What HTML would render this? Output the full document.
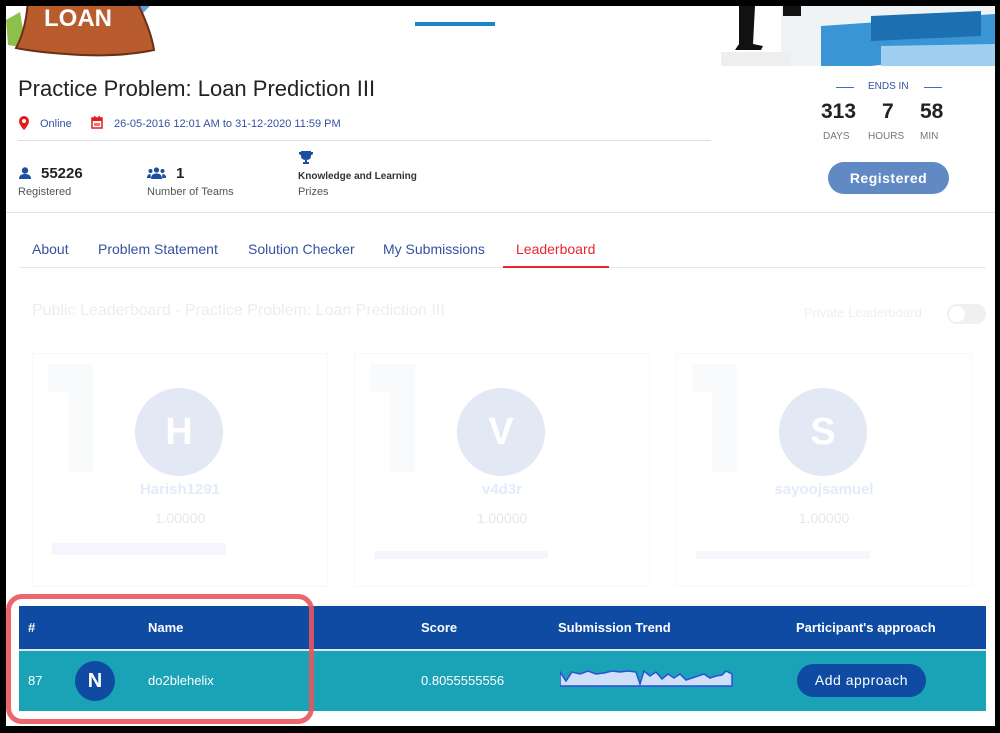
<!DOCTYPE html>
<html><head><meta charset="utf-8"><style>
*{margin:0;padding:0;box-sizing:border-box}
body{width:1000px;height:733px;background:#000;font-family:"Liberation Sans",sans-serif;overflow:hidden;position:relative}
.page{position:absolute;left:6px;top:6px;width:989px;height:720px;background:#fff;overflow:hidden}
.a{position:absolute}
.one{position:absolute;width:70px;height:108px}
</style></head><body>
<div class="page">
 <svg class="a" style="left:0;top:-6px" width="160" height="65">
  <path d="M0 20 L14 12 L20 48 L2 45Z" fill="#8cc04a"/>
  <path d="M120 -5 L150 0 L135 15Z" fill="#5ba3d9"/>
  <path d="M22 0 L130 0 Q145 30 148 50 Q110 58 60 54 Q30 52 10 48 Q20 30 22 0Z" fill="#b85c2e" stroke="#6b2f13" stroke-width="2"/>
  <text x="38" y="26" font-family="Liberation Sans" font-weight="bold" font-size="24" fill="#fff">LOAN</text>
 </svg>
 <div class="a" style="left:409px;top:16px;width:80px;height:4px;background:#1a87c4"></div>
 <svg class="a" style="left:715px;top:0" width="274" height="60">
  <rect x="60" y="0" width="214" height="60" fill="#f0f3f6"/>
  <path d="M100 20 L274 8 L274 45 L150 60 L100 60Z" fill="#3a95d6"/>
  <path d="M150 10 L260 5 L260 30 L150 35Z" fill="#1c6fb0"/>
  <path d="M160 40 L274 38 L274 60 L160 60Z" fill="#9fd0f0"/>
  <path d="M18 0 L34 0 L32 38 L42 40 L40 44 L14 44 L18 38Z" fill="#111"/>
  <rect x="62" y="0" width="18" height="10" fill="#111"/>
  <rect x="0" y="46" width="70" height="14" fill="#eee"/>
 </svg>
 <div class="a" style="left:12px;top:70px;font-size:22px;color:#222">Practice Problem: Loan Prediction III</div>
 <svg class="a" style="left:12px;top:110px" width="12" height="14"><path d="M6 0a5 5 0 0 1 5 5c0 4-5 9-5 9S1 9 1 5a5 5 0 0 1 5-5z" fill="#e21b1b"/><circle cx="6" cy="5" r="2" fill="#fff"/></svg>
 <div class="a" style="left:34px;top:112px;font-size:11px;color:#3552a0">Online</div>
 <svg class="a" style="left:85px;top:110px" width="12" height="13"><rect x="1" y="2" width="10" height="10" fill="none" stroke="#e21b1b" stroke-width="1.5"/><rect x="1" y="2" width="10" height="3" fill="#e21b1b"/><rect x="3" y="0" width="1.5" height="3" fill="#e21b1b"/><rect x="7.5" y="0" width="1.5" height="3" fill="#e21b1b"/><rect x="3" y="7" width="6" height="3" fill="#e21b1b" opacity=".6"/></svg>
 <div class="a" style="left:108px;top:112px;font-size:11px;color:#3552a0">26-05-2016 12:01 AM to 31-12-2020 11:59 PM</div>
 <div class="a" style="left:12px;top:134px;width:693px;height:1px;background:#ddd"></div>
 <svg class="a" style="left:13px;top:161px" width="12" height="12"><circle cx="6" cy="3.5" r="3.2" fill="#1b4fa0"/><path d="M0 12 Q0 7 6 7 Q12 7 12 12Z" fill="#1b4fa0"/></svg>
 <div class="a" style="left:35px;top:159px;font-size:15px;font-weight:bold;color:#222">55226</div>
 <div class="a" style="left:12px;top:180px;font-size:11px;color:#555">Registered</div>
 <svg class="a" style="left:141px;top:161px" width="19" height="12"><circle cx="9.5" cy="3" r="2.6" fill="#1b4fa0"/><circle cx="3.5" cy="4" r="2" fill="#1b4fa0"/><circle cx="15.5" cy="4" r="2" fill="#1b4fa0"/><path d="M4 12 Q4 6.5 9.5 6.5 Q15 6.5 15 12Z M0 11 Q0 7 3.5 7 L4 11Z M19 11 Q19 7 15.5 7 L15 11Z" fill="#1b4fa0"/></svg>
 <div class="a" style="left:170px;top:159px;font-size:15px;font-weight:bold;color:#222">1</div>
 <div class="a" style="left:141px;top:180px;font-size:11px;color:#555">Number of Teams</div>
 <svg class="a" style="left:292px;top:145px" width="16" height="14"><path d="M3 0 H13 V5 Q13 9 8 9 Q3 9 3 5Z M1 1 H3 V4 Q1 4 1 2Z M15 1 H13 V4 Q15 4 15 2Z M7 9 H9 V11 H11 V13 H5 V11 H7Z" fill="#1b4fa0"/></svg>
 <div class="a" style="left:292px;top:165px;font-size:10px;font-weight:bold;color:#333">Knowledge and Learning</div>
 <div class="a" style="left:292px;top:180px;font-size:11px;color:#555">Prizes</div>
 <div class="a" style="left:830px;top:81px;width:18px;height:1px;background:#3a6fc8"></div>
 <div class="a" style="left:862px;top:75px;font-size:10px;color:#3552a0">ENDS IN</div>
 <div class="a" style="left:918px;top:81px;width:18px;height:1px;background:#3a6fc8"></div>
 <div class="a" style="left:815px;top:94px;font-size:21px;font-weight:bold;color:#222">313</div>
 <div class="a" style="left:876px;top:94px;font-size:21px;font-weight:bold;color:#222">7</div>
 <div class="a" style="left:914px;top:94px;font-size:21px;font-weight:bold;color:#222">58</div>
 <div class="a" style="left:817px;top:125px;font-size:10px;color:#777">DAYS</div>
 <div class="a" style="left:862px;top:125px;font-size:10px;color:#777">HOURS</div>
 <div class="a" style="left:914px;top:125px;font-size:10px;color:#777">MIN</div>
 <div class="a" style="left:822px;top:156px;width:121px;height:32px;border-radius:16px;background:#6189c4;color:#fff;font-size:14px;font-weight:bold;text-align:center;line-height:32px;letter-spacing:.5px">Registered</div>
 <div class="a" style="left:0;top:206px;width:989px;height:1px;background:#e3e3e3"></div>
 <div class="a" style="top:235px;left:26px;font-size:14px;color:#3552a0">About</div>
 <div class="a" style="top:235px;left:92px;font-size:14px;color:#3552a0">Problem Statement</div>
 <div class="a" style="top:235px;left:242px;font-size:14px;color:#3552a0">Solution Checker</div>
 <div class="a" style="top:235px;left:377px;font-size:14px;color:#3552a0">My Submissions</div>
 <div class="a" style="top:235px;left:510px;font-size:14px;color:#e8262b">Leaderboard</div>
 <div class="a" style="left:13px;top:261px;width:967px;height:1px;background:#e6eaf0"></div>
 <div class="a" style="left:497px;top:260px;width:106px;height:2px;background:#e8262b"></div>
 <div class="a" style="left:26px;top:296px;font-size:16px;color:#ededed">Public Leaderboard - Practice Problem: Loan Prediction III</div>
 <div class="a" style="left:798px;top:299px;font-size:13px;color:#efefef">Private Leaderboard</div>
 <div class="a" style="left:941px;top:298px;width:39px;height:20px;border-radius:10px;background:#f0f0f0"></div>
 <div class="a" style="left:943px;top:300px;width:16px;height:16px;border-radius:8px;background:#fff"></div>

 <div class="a" style="left:26px;top:347px;width:296px;height:234px;border:1px solid #f8f8f8"></div>
 <div class="a" style="left:348px;top:347px;width:296px;height:234px;border:1px solid #f8f8f8"></div>
 <div class="a" style="left:670px;top:347px;width:296px;height:234px;border:1px solid #f8f8f8"></div>
 <svg class="one" style="left:42px;top:358px" viewBox="0 0 70 108"><path d="M0 0 H45 V108 H20 V28 H0Z" fill="#f9fafc"/></svg>
 <svg class="one" style="left:364px;top:358px" viewBox="0 0 70 108"><path d="M0 0 H45 V108 H20 V28 H0Z" fill="#f9fafc"/></svg>
 <svg class="one" style="left:686px;top:358px" viewBox="0 0 70 108"><path d="M0 0 H45 V108 H20 V28 H0Z" fill="#f9fafc"/></svg>
 <div class="a" style="left:129px;top:382px;width:88px;height:88px;border-radius:50%;background:#e2e8f4;color:#fff;font-size:38px;font-weight:bold;text-align:center;line-height:88px">H</div>
 <div class="a" style="left:451px;top:382px;width:88px;height:88px;border-radius:50%;background:#e2e8f4;color:#fff;font-size:38px;font-weight:bold;text-align:center;line-height:88px">V</div>
 <div class="a" style="left:773px;top:382px;width:88px;height:88px;border-radius:50%;background:#e2e8f4;color:#fff;font-size:38px;font-weight:bold;text-align:center;line-height:88px">S</div>
 <div class="a" style="left:26px;width:296px;top:475px;text-align:center;font-size:15px;font-weight:bold;color:#e3ebfb">Harish1291</div>
 <div class="a" style="left:348px;width:296px;top:475px;text-align:center;font-size:15px;font-weight:bold;color:#e3ebfb">v4d3r</div>
 <div class="a" style="left:670px;width:296px;top:475px;text-align:center;font-size:15px;font-weight:bold;color:#e3ebfb">sayoojsamuel</div>
 <div class="a" style="left:26px;width:296px;top:504px;text-align:center;font-size:14px;color:#e6e6e6">1.00000</div>
 <div class="a" style="left:348px;width:296px;top:504px;text-align:center;font-size:14px;color:#e6e6e6">1.00000</div>
 <div class="a" style="left:670px;width:296px;top:504px;text-align:center;font-size:14px;color:#e6e6e6">1.00000</div>
 <div class="a" style="left:46px;top:537px;width:174px;height:12px;background:#f5f6fd"></div>
 <div class="a" style="left:368px;top:545px;width:174px;height:8px;background:#f5f6fd"></div>
 <div class="a" style="left:690px;top:545px;width:174px;height:8px;background:#f6f6fd"></div>
 <div class="a" style="left:13px;top:600px;width:967px;height:43px;background:#0f4aa3"></div>
 <div class="a" style="left:13px;top:643px;width:967px;height:2px;background:#dfe6f0"></div>
 <div class="a" style="left:13px;top:645px;width:967px;height:60px;background:#1aa2b6"></div>
 <div class="a" style="left:22px;top:614px;font-size:13px;font-weight:bold;color:#fff">#</div>
 <div class="a" style="left:142px;top:614px;font-size:13px;font-weight:bold;color:#fff">Name</div>
 <div class="a" style="left:415px;top:614px;font-size:13px;font-weight:bold;color:#fff">Score</div>
 <div class="a" style="left:552px;top:614px;font-size:13px;font-weight:bold;color:#fff">Submission Trend</div>
 <div class="a" style="left:790px;top:614px;font-size:13px;font-weight:bold;color:#fff">Participant's approach</div>
 <div class="a" style="left:22px;top:667px;font-size:13px;color:#fff">87</div>
 <div class="a" style="left:69px;top:655px;width:40px;height:40px;border-radius:50%;background:#0f4aa3;color:#fff;font-size:20px;font-weight:bold;text-align:center;line-height:40px">N</div>
 <div class="a" style="left:142px;top:667px;font-size:13px;color:#fff">do2blehelix</div>
 <div class="a" style="left:415px;top:667px;font-size:13px;color:#fff">0.8055555556</div>
 <svg class="a" style="left:554px;top:660px" width="175" height="24"><path d="M0 6 L6 15 L12 6 L20 8 L28 5 L36 8 L44 7 L52 5 L60 6 L68 5 L76 6 L80 18 L84 5 L90 10 L96 6 L102 13 L108 8 L114 12 L120 8 L126 14 L132 12 L138 10 L144 8 L150 12 L156 10 L162 9 L166 5 L172 8 L172 20 L0 20Z" fill="#cde0f8" stroke="#2a4fd8" stroke-width="1.5"/></svg>
 <div class="a" style="left:791px;top:658px;width:129px;height:33px;border-radius:17px;background:#0f4aa3;color:#fff;font-size:14px;text-align:center;line-height:33px;letter-spacing:.5px">Add approach</div>
 <div class="a" style="left:0;top:588px;width:308px;height:130px;border:5px solid #e9575c;border-radius:16px;opacity:.9"></div>
</div>
</body></html>
